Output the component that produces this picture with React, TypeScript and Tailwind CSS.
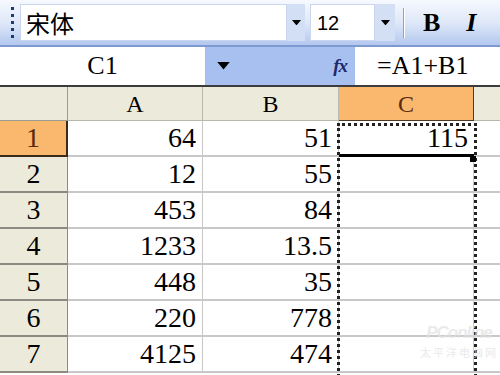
import React from 'react';

const rows: [string, string, string, string][] = [
  ['1', '64', '51', '115'],
  ['2', '12', '55', ''],
  ['3', '453', '84', ''],
  ['4', '1233', '13.5', ''],
  ['5', '448', '35', ''],
  ['6', '220', '778', ''],
  ['7', '4125', '474', ''],
];

const Arrow: React.FC<{ w?: number }> = ({ w = 9 }) => (
  <svg width={w} height={w / 2 + 1} viewBox="0 0 10 6">
    <path d="M0 0H10L5 6Z" fill="#000" />
  </svg>
);

export default function App() {
  return (
    <div className="relative w-[500px] h-[375px] overflow-hidden bg-white font-['Liberation_Serif',serif] text-black">
      {/* Toolbar */}
      <div className="flex items-center h-[47px] bg-gradient-to-b from-[#f6f9fe] via-[#dfe8f8] to-[#b3c8ef] border-b-2 border-[#7f9ad0]">
        <div className="w-[20px] flex flex-col items-center gap-[4px] pl-[4px]">
          {[0, 1, 2, 3, 4].map((i) => (
            <span key={i} className="w-[3px] h-[3px] bg-[#1d3a78]" />
          ))}
        </div>
        <div className="flex items-center w-[267px] h-[37px] bg-white border border-[#c9d6ee]">
          <span className="pl-[5px] text-[24px] leading-none font-['Noto_Sans_CJK_SC',sans-serif]">
            宋体
          </span>
        </div>
        <div className="flex items-center justify-center w-[18px] h-[37px] bg-[#d3dff4]">
          <Arrow />
        </div>
        <div className="w-[5px]" />
        <div className="flex items-center w-[65px] h-[37px] bg-white border border-[#c9d6ee]">
          <span className="pl-[6px] text-[20px] leading-none font-['Liberation_Sans',sans-serif]">
            12
          </span>
        </div>
        <div className="flex items-center justify-center w-[20px] h-[37px] bg-[#d3dff4]">
          <Arrow />
        </div>
        <div className="ml-[8px] w-[2px] h-[30px] border-l border-[#8aa3d3] border-r border-r-white" />
        <span className="ml-[18px] text-[26px] font-bold leading-none">B</span>
        <span className="ml-[26px] text-[26px] font-bold italic leading-none">I</span>
      </div>

      {/* Formula bar */}
      <div className="flex h-[40px] border-b-2 border-[#3c3c3c]">
        <div className="w-[205px] bg-white flex items-center justify-center text-[26px] leading-none">
          C1
        </div>
        <div className="w-[150px] bg-[#a7c0f0] flex items-center justify-between pl-[12px] pr-[8px]">
          <Arrow w={13} />
          <span className="text-[19px] italic font-bold text-[#1e2a6a] tracking-[-1px]">fx</span>
        </div>
        <div className="flex-1 bg-white flex items-center pl-[22px] text-[26px] leading-none">
          =A1+B1
        </div>
      </div>

      {/* Sheet */}
      <div className="grid grid-cols-[68px_135px_136px_135px_1fr] text-[28px] leading-none">
        <div className="h-[34px] bg-[#ebeadb] border-r border-b border-[#9c9b91]" />
        {['A', 'B'].map((c) => (
          <div
            key={c}
            className="h-[34px] bg-[#ebeadb] border-r border-b border-[#b8b7ab] flex items-center justify-center text-[24px]"
          >
            {c}
          </div>
        ))}
        <div className="h-[34px] bg-[#f9b86e] border-r border-b border-[#4c3a26] flex items-center justify-center text-[24px] text-[#5a2a10]">
          C
        </div>
        <div className="h-[34px] bg-[#ebeadb] border-b border-[#b8b7ab]" />

        {rows.map(([n, a, b, c], i) => (
          <React.Fragment key={n}>
            <div
              className={
                i === 0
                  ? 'h-[36px] bg-[#f9b86e] border-r-2 border-b-2 border-[#3a2a1a] flex items-center justify-center text-[#5a2a10]'
                  : 'h-[36px] bg-[#ebeadb] border-r border-b-2 border-[#8c8b82] flex items-center justify-center'
              }
            >
              {n}
            </div>
            <div className="h-[36px] border-r border-b-2 border-[#c8c8c8] flex items-center justify-end pr-[6px]">
              {a}
            </div>
            <div className="h-[36px] border-r border-b-2 border-[#c8c8c8] flex items-center justify-end pr-[6px]">
              {b}
            </div>
            <div
              className={
                i === 0
                  ? 'h-[36px] border-b-[3px] border-black flex items-center justify-end pr-[6px]'
                  : 'h-[36px] border-r border-b-2 border-[#c8c8c8]'
              }
            >
              {c}
            </div>
            <div className="h-[36px] border-b-2 border-[#c8c8c8]" />
          </React.Fragment>
        ))}
      </div>

      {/* Copy selection (marching ants) */}
      <div className="absolute left-[337px] top-[123px] w-[140px] h-[260px] border-[3px] border-dotted border-[#222]" />
      <div className="absolute left-[470px] top-[156px] w-[6px] h-[6px] bg-black" />

      {/* Watermark */}
      <div className="absolute left-[420px] top-[320px] flex flex-col items-center opacity-70 pointer-events-none">
        <span className="text-[17px] font-bold italic text-[#e2e2e2] font-['Liberation_Sans',sans-serif] tracking-[-1px]">
          PConline
        </span>
        <span className="text-[11px] text-[#e2e2e2] font-['Noto_Sans_CJK_SC',sans-serif] tracking-[2px] -mt-[2px]">
          太平洋电脑网
        </span>
      </div>
    </div>
  );
}
